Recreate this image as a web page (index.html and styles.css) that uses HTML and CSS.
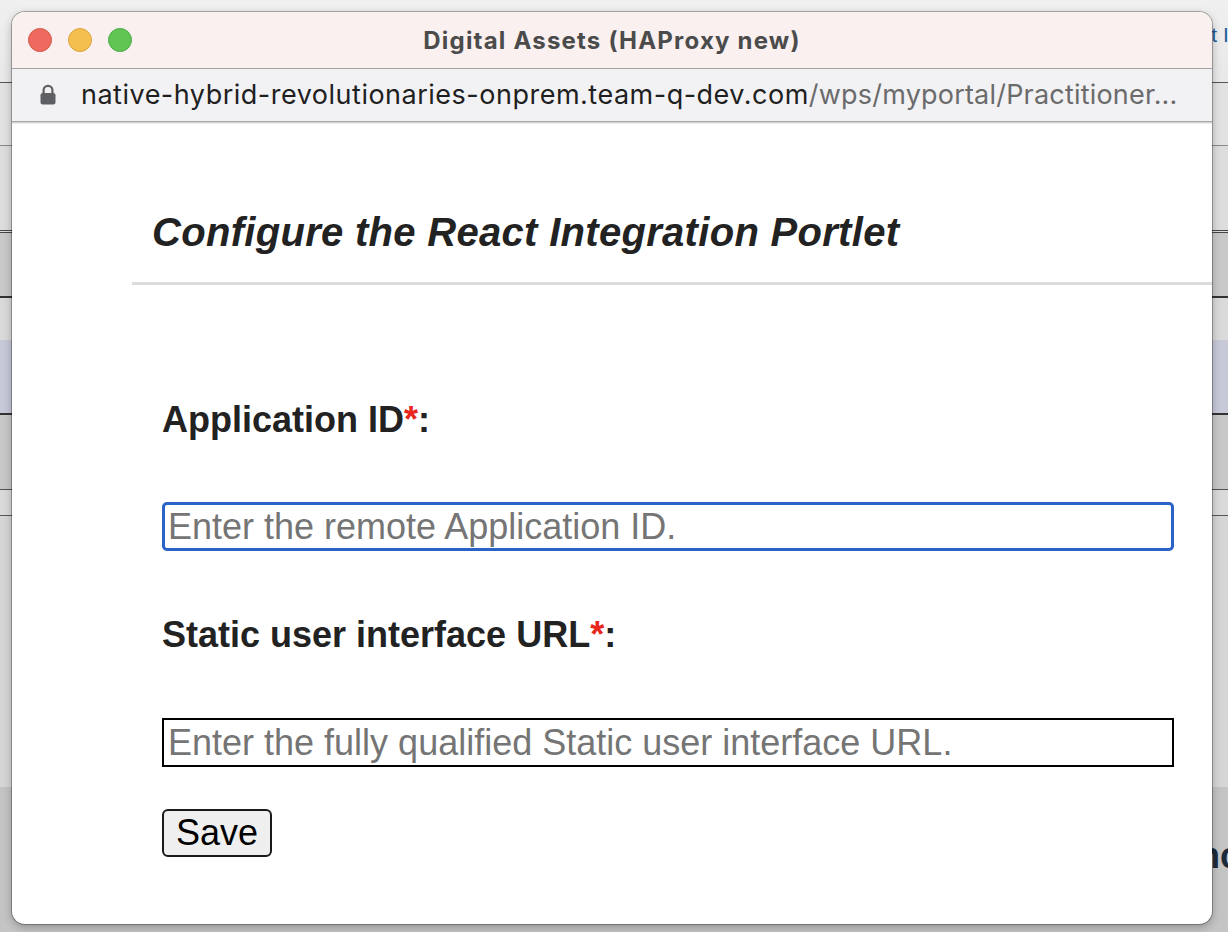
FILE: index.html
```html
<!DOCTYPE html>
<html lang="en">
<head>
<meta charset="utf-8">
<title>Configure the React Integration Portlet</title>
<link rel="stylesheet" href="styles.css">
</head>
<body>
<div class="backdrop">
  <div class="band band-top"><span class="bg-link">Edit Info</span></div>
  <div class="band band-a"></div>
  <div class="band band-b"></div>
  <div class="band band-c"></div>
  <div class="band band-d"></div>
  <div class="band band-e"></div>
  <div class="band band-f"></div>
  <div class="band band-g"></div>
  <div class="band band-h"></div>
  <div class="band band-i"><span class="bg-text">Advanc</span></div>
</div>

<div class="window">
  <div class="titlebar">
    <div class="lights">
      <span class="light red"></span>
      <span class="light yellow"></span>
      <span class="light green"></span>
    </div>
    <div class="title">Digital Assets (HAProxy new)</div>
  </div>
  <div class="urlbar">
    <svg class="lock" width="16" height="21" viewBox="0 0 16 21" aria-hidden="true">
      <path d="M3.6 9.5V6.2a4.4 4.4 0 0 1 8.8 0v3.3" fill="none" stroke="#5f6064" stroke-width="2.2"/>
      <rect x="0.5" y="9" width="15" height="11.5" rx="2.2" fill="#5f6064"/>
    </svg>
    <div class="url"><span class="domain">native-hybrid-revolutionaries-onprem.team-q-dev.com</span><span class="path">/wps/myportal/Practitioner...</span></div>
  </div>
  <div class="content">
    <div class="portlet">
      <h1 class="heading">Configure the React Integration Portlet</h1>
      <div class="rule"></div>
      <form class="form">
        <label class="label label-first" for="appid">Application ID<span class="req">*</span>:</label>
        <input id="appid" class="field field-focus" type="text" placeholder="Enter the remote Application ID.">
        <label class="label label-second" for="uiurl">Static user interface URL<span class="req">*</span>:</label>
        <input id="uiurl" class="field field-plain" type="text" placeholder="Enter the fully qualified Static user interface URL.">
        <button type="button" class="save">Save</button>
      </form>
    </div>
  </div>
</div>
</body>
</html>
```

FILE: styles.css
```css
html, body {
  margin: 0;
  padding: 0;
}
body {
  width: 1228px;
  height: 932px;
  overflow: hidden;
  position: relative;
  font-family: "Liberation Sans", Arial, sans-serif;
  background: #d6d6d6;
}

/* background page */
.backdrop {
  display: flex;
  flex-direction: column;
  width: 1228px;
  height: 932px;
}
.band { flex: none; }
.band-top {
  height: 82px;
  background: linear-gradient(#f0f0f0, #e8e8e8);
  border-bottom: 1px solid #555;
  white-space: nowrap;
  overflow: hidden;
  display: flex;
  align-items: flex-start;
}
.bg-link {
  padding-left: 1181px;
  padding-top: 23px;
  font-size: 21px;
  color: #1d5c99;
}
.band-a { height: 62px; background: #e2e2e2; border-bottom: 1px solid #8a8a8a; }
.band-b { height: 84px; background: #dddddd; border-bottom: 3px double #444; }
.band-c { height: 63px; background: #c9c9c9; border-bottom: 2px solid #333; }
.band-d { height: 42px; background: #dadada; }
.band-e { height: 73px; background: #c7c9d9; border-bottom: 2px solid #333; }
.band-f { height: 74px; background: #c8c8c8; border-bottom: 1px solid #555; }
.band-g { height: 25px; background: #dadada; border-bottom: 1px solid #555; }
.band-h { height: 271px; background: #d6d6d6; }
.band-i {
  flex: 1;
  background: #c4c4c4;
  white-space: nowrap;
  overflow: hidden;
  display: flex;
  align-items: flex-start;
}
.bg-text {
  padding-left: 1110px;
  padding-top: 48px;
  font-size: 36px;
  font-weight: bold;
  color: #1e2a3a;
}

/* popup window */
.window {
  position: absolute;
  left: 12px;
  top: 12px;
  width: 1200px;
  height: 912px;
  border-radius: 13px;
  background: #ffffff;
  overflow: hidden;
  display: flex;
  flex-direction: column;
  box-shadow: 0 0 0 1px rgba(0, 0, 0, 0.28), 0 3px 10px rgba(0, 0, 0, 0.28);
}
.titlebar {
  flex: none;
  height: 56px;
  background: #f9f0ef;
  border-bottom: 1px solid #a3a3a3;
  display: flex;
  align-items: center;
  position: relative;
}
.lights {
  display: flex;
  gap: 16px;
  padding-left: 16px;
}
.light {
  width: 24px;
  height: 24px;
  border-radius: 50%;
  box-sizing: border-box;
}
.red { background: #ee6a5f; border: 1px solid #d4594d; }
.yellow { background: #f5bf4f; border: 1px solid #d9a53f; }
.green { background: #61c554; border: 1px solid #50aa43; }
.title {
  position: absolute;
  left: 0;
  right: 0;
  top: 0;
  bottom: 0;
  display: flex;
  align-items: center;
  justify-content: center;
  font-family: Inter, "Liberation Sans", sans-serif;
  font-weight: 700;
  font-size: 24px;
  letter-spacing: 1.2px;
  color: #4b4b4b;
}
.urlbar {
  flex: none;
  height: 52px;
  background: #f2f2f4;
  border-bottom: 1px solid #a8a8a8;
  box-shadow: 0 1px 0 #d4d4d4, 0 2px 0 #ececec;
  display: flex;
  align-items: center;
  padding-left: 28px;
  gap: 25px;
  position: relative;
  z-index: 1;
}
.lock { flex: none; margin-top: -2px; }
.url {
  font-family: Inter, "Liberation Sans", sans-serif;
  font-size: 27px;
  letter-spacing: 0.5px;
  white-space: nowrap;
  margin-top: -2px;
}
.domain { color: #1f1f1f; }
.path { color: #6b6b6b; letter-spacing: 0.2px; }

.content {
  flex: 1;
  overflow: hidden;
}
.portlet {
  margin-left: 120px;
}
.heading {
  margin: 0;
  padding: 87px 0 0 20px;
  font-size: 40px;
  line-height: 46px;
  font-weight: bold;
  font-style: italic;
  letter-spacing: 0.3px;
  color: #222;
}
.rule {
  margin-top: 27px;
  height: 3px;
  background: #dcdcdc;
}
.form {
  display: flex;
  flex-direction: column;
  align-items: flex-start;
  padding: 114px 0 0 30px;
}
.label {
  font-size: 36px;
  line-height: 42px;
  font-weight: bold;
  color: #222;
}
.req { color: #e8261b; }
.label-second { margin-top: 63px; }
.field {
  box-sizing: border-box;
  width: 1012px;
  margin: 61px 0 0 0;
  font-family: "Liberation Sans", Arial, sans-serif;
  font-size: 36px;
  background: #fff;
  color: #222;
  outline: none;
}
.field::placeholder { color: #757575; opacity: 1; }
.field-focus {
  height: 49px;
  border: 3px solid #2b62c7;
  border-radius: 5px;
  padding: 0 3px;
}
.field-plain {
  height: 49px;
  border: 2px solid #000;
  border-radius: 0;
  padding: 0 4px;
  margin-top: 62px;
}
.save {
  margin-top: 42px;
  height: 48px;
  box-sizing: border-box;
  padding: 0 12px;
  font-family: "Liberation Sans", Arial, sans-serif;
  font-size: 36px;
  color: #000;
  background: #efefef;
  border: 2px solid #1a1a1a;
  border-radius: 6px;
}
```
